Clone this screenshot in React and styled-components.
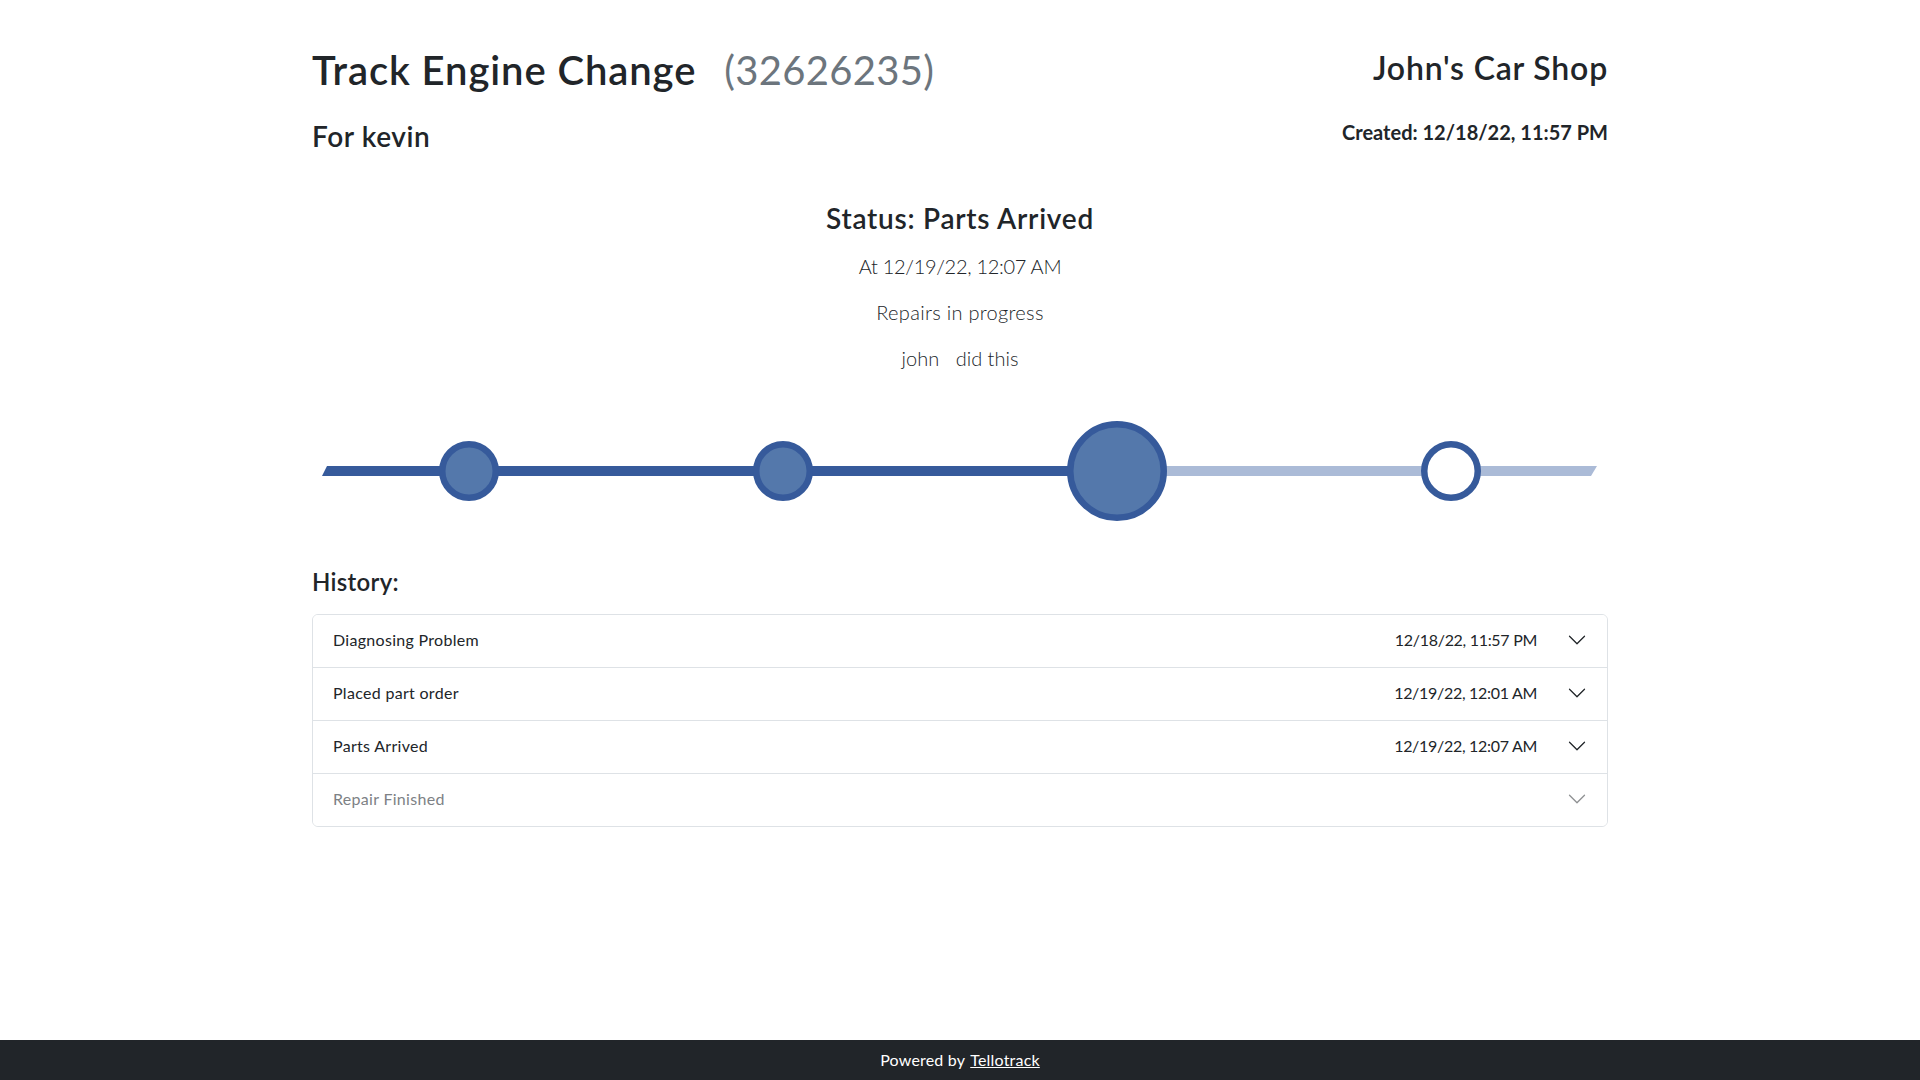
import React from 'react';
import styled, { createGlobalStyle } from 'styled-components';

const FONT = `Lato, "Noto Sans", "Liberation Sans", sans-serif`;

const GlobalStyle = createGlobalStyle`
  *, *::before, *::after { box-sizing: border-box; }
  body {
    margin: 0;
    font-family: ${FONT};
    font-size: 16px;
    line-height: 1.5;
    color: #212529;
    background: #fff;
  }
`;

const Page = styled.div`
  min-height: 100vh;
  display: flex;
  flex-direction: column;
`;

const Main = styled.main`
  flex: 1;
`;

const Container = styled.div`
  max-width: 1320px;
  margin: 0 auto;
  padding: 0 12px;
`;

const Header = styled.header`
  display: flex;
  justify-content: space-between;
  align-items: flex-start;
  padding-top: 46px;
`;

const Col = styled.div`
  display: flex;
  flex-direction: column;
  align-items: ${(p) => (p.$right ? 'flex-end' : 'flex-start')};
`;

const Title = styled.h1`
  margin: 0;
  font-size: 40px;
  font-weight: 600;
  line-height: 48px;
  letter-spacing: 0.9px;
`;

const RefNo = styled.span`
  color: #6c757d;
  font-weight: 400;
  margin-left: 28px;
  letter-spacing: 0.3px;
`;

const Customer = styled.h3`
  margin: 26px 0 0;
  font-size: 28px;
  font-weight: 600;
  line-height: 33px;
  letter-spacing: 0.6px;
`;

const Shop = styled.h2`
  margin: 3px 0 0;
  font-size: 32px;
  font-weight: 600;
  line-height: 38px;
  letter-spacing: 0.8px;
`;

const Created = styled.h5`
  margin: 33px 0 0;
  font-size: 20px;
  font-weight: 700;
  line-height: 24px;
`;

const StatusBlock = styled.section`
  display: flex;
  flex-direction: column;
  align-items: center;
  margin-top: 48px;
`;

const StatusTitle = styled.h3`
  margin: 0 0 16px;
  font-size: 28px;
  font-weight: 600;
  line-height: 34px;
  letter-spacing: 0.75px;
`;

const Lead = styled.p`
  margin: 0 0 16px;
  font-size: 20px;
  font-weight: 300;
  line-height: 30px;
  letter-spacing: ${(p) => p.$spacing || '0px'};
`;

const Actor = styled.span`
  margin-right: 11px;
`;

const TimelineSvg = styled.svg`
  display: block;
  width: 100%;
  height: 110px;
  margin-top: 27px;
`;

const HistoryTitle = styled.h4`
  margin: 41px 0 18px;
  font-size: 24px;
  font-weight: 600;
  line-height: 29px;
  letter-spacing: 0.3px;
`;

const Accordion = styled.div`
  border: 1px solid #dee2e6;
  border-radius: 6px;
  overflow: hidden;
`;

const Item = styled.div`
  & + & {
    border-top: 1px solid #dee2e6;
  }
`;

const ItemButton = styled.button`
  display: flex;
  align-items: center;
  width: 100%;
  padding: 13px 20px 15px;
  border: 0;
  background: #fff;
  font-family: ${FONT};
  font-size: 16px;
  line-height: 24px;
  color: ${(p) => (p.$muted ? '#7d8185' : '#212529')};
  text-align: left;
  cursor: pointer;
`;

const Label = styled.span`
  flex: 1;
  letter-spacing: 0.3px;
`;

const DateText = styled.span`
  margin-right: 30px;
  letter-spacing: -0.3px;
`;

const Chevron = styled.svg`
  width: 20px;
  height: 20px;
  flex-shrink: 0;
  opacity: ${(p) => (p.$muted ? 0.5 : 1)};
`;

const Footer = styled.footer`
  height: 40px;
  background: #212529;
  color: #fff;
  display: flex;
  align-items: center;
  justify-content: center;
  font-size: 16px;
  line-height: 24px;
  letter-spacing: 0.2px;
`;

const FooterLink = styled.a`
  color: #fff;
  text-decoration: underline;
  margin-left: 5px;
`;

const DARK = '#365a9b';
const FILL = '#5478ab';
const LIGHT = '#abbbd7';

const history = [
  { label: 'Diagnosing Problem', date: '12/18/22, 11:57 PM' },
  { label: 'Placed part order', date: '12/19/22, 12:01 AM' },
  { label: 'Parts Arrived', date: '12/19/22, 12:07 AM' },
  { label: 'Repair Finished', date: '', muted: true },
];

function Timeline() {
  const cy = 55;
  return (
    <TimelineSvg viewBox="0 0 1296 110" preserveAspectRatio="none">
      <polygon points="15,50 805,50 805,60 10,60" fill={DARK} />
      <polygon points="805,50 1285,50 1279,60 805,60" fill={LIGHT} />
      <circle cx="157" cy={cy} r="26.75" fill={FILL} stroke={DARK} strokeWidth="6.5" />
      <circle cx="471" cy={cy} r="26.75" fill={FILL} stroke={DARK} strokeWidth="6.5" />
      <circle cx="805" cy={cy} r="46.75" fill={FILL} stroke={DARK} strokeWidth="6.5" />
      <circle cx="1139" cy={cy} r="26.75" fill="#fff" stroke={DARK} strokeWidth="6.5" />
    </TimelineSvg>
  );
}

function ChevronIcon({ muted }) {
  return (
    <Chevron $muted={muted} viewBox="0 0 16 16" fill="#212529">
      <path
        fillRule="evenodd"
        d="M1.646 4.646a.5.5 0 0 1 .708 0L8 10.293l5.646-5.647a.5.5 0 0 1 .708.708l-6 6a.5.5 0 0 1-.708 0l-6-6a.5.5 0 0 1 0-.708z"
      />
    </Chevron>
  );
}

export default function App() {
  return (
    <Page>
      <GlobalStyle />
      <Main>
        <Container>
          <Header>
            <Col>
              <Title>
                Track Engine Change<RefNo>(32626235)</RefNo>
              </Title>
              <Customer>For kevin</Customer>
            </Col>
            <Col $right>
              <Shop>John's Car Shop</Shop>
              <Created>Created: 12/18/22, 11:57 PM</Created>
            </Col>
          </Header>

          <StatusBlock>
            <StatusTitle>Status: Parts Arrived</StatusTitle>
            <Lead $spacing="-0.3px">At 12/19/22, 12:07 AM</Lead>
            <Lead $spacing="0.3px">Repairs in progress</Lead>
            <Lead>
              <Actor>john</Actor> did this
            </Lead>
          </StatusBlock>

          <Timeline />

          <HistoryTitle>History:</HistoryTitle>
          <Accordion>
            {history.map((h) => (
              <Item key={h.label}>
                <ItemButton $muted={h.muted}>
                  <Label>{h.label}</Label>
                  {h.date && <DateText>{h.date}</DateText>}
                  <ChevronIcon muted={h.muted} />
                </ItemButton>
              </Item>
            ))}
          </Accordion>
        </Container>
      </Main>
      <Footer>
        Powered by<FooterLink href="#">Tellotrack</FooterLink>
      </Footer>
    </Page>
  );
}
